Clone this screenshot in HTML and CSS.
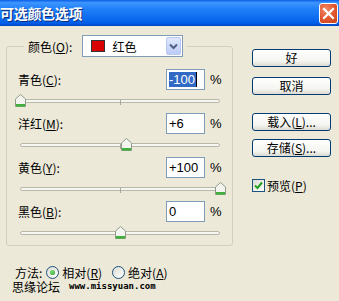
FILE: index.html
```html
<!DOCTYPE html>
<html lang="zh-CN">
<head>
  <meta charset="UTF-8" />
  <title>可选颜色选项</title>
  <link rel="stylesheet" href="styles.css">
</head>
<body>
  <div class="dialog">
    <div class="titlebar">
      <span class="title">可选颜色选项</span>
      <span class="close">
        <svg width="13" height="13" viewBox="0 0 13 13"><path d="M2 2 L11 11 M11 2 L2 11" stroke="#fff" stroke-width="2.2" stroke-linecap="square"/></svg>
      </span>
    </div>

    <div class="main">
      <div class="left">
        <fieldset class="group">
          <legend class="legend">
            <span class="legend-label">颜色(<u>O</u>):</span>
            <span class="select">
              <span class="swatch"></span>
              <span class="select-text">红色</span>
              <span class="select-btn">
                <svg width="9" height="7" viewBox="0 0 9 7"><path d="M1 1.5 L4.5 5 L8 1.5" fill="none" stroke="#4d6185" stroke-width="2"/></svg>
              </span>
            </span>
          </legend>

          <div class="field">
            <div class="line">
              <span class="label">青色(<u>C</u>):</span>
              <span class="input"><span class="sel">-100</span><span class="caret"></span></span>
              <span class="pct">%</span>
            </div>
            <div class="slider">
              <div class="track"><span class="tick"></span></div>
              <span class="thumb" style="left: 0%"><svg width="11" height="13" viewBox="0 0 11 13"><path d="M0.5 5 L5.5 0.5 L10.5 5 L10.5 12.5 L0.5 12.5 Z" fill="#f4f4f0" stroke="#8d9a8a"/><rect x="1" y="10" width="9" height="2.5" fill="#3fb03a"/></svg></span>
            </div>
          </div>

          <div class="field">
            <div class="line">
              <span class="label">洋红(<u>M</u>):</span>
              <span class="input">+6</span>
              <span class="pct">%</span>
            </div>
            <div class="slider">
              <div class="track"><span class="tick"></span></div>
              <span class="thumb" style="left: 53%"><svg width="11" height="13" viewBox="0 0 11 13"><path d="M0.5 5 L5.5 0.5 L10.5 5 L10.5 12.5 L0.5 12.5 Z" fill="#f4f4f0" stroke="#8d9a8a"/><rect x="1" y="10" width="9" height="2.5" fill="#3fb03a"/></svg></span>
            </div>
          </div>

          <div class="field">
            <div class="line">
              <span class="label">黄色(<u>Y</u>):</span>
              <span class="input">+100</span>
              <span class="pct">%</span>
            </div>
            <div class="slider">
              <div class="track"><span class="tick"></span></div>
              <span class="thumb" style="left: 100%"><svg width="11" height="13" viewBox="0 0 11 13"><path d="M0.5 5 L5.5 0.5 L10.5 5 L10.5 12.5 L0.5 12.5 Z" fill="#f4f4f0" stroke="#8d9a8a"/><rect x="1" y="10" width="9" height="2.5" fill="#3fb03a"/></svg></span>
            </div>
          </div>

          <div class="field">
            <div class="line">
              <span class="label">黑色(<u>B</u>):</span>
              <span class="input">0</span>
              <span class="pct">%</span>
            </div>
            <div class="slider">
              <div class="track"><span class="tick"></span></div>
              <span class="thumb" style="left: 50%"><svg width="11" height="13" viewBox="0 0 11 13"><path d="M0.5 5 L5.5 0.5 L10.5 5 L10.5 12.5 L0.5 12.5 Z" fill="#f4f4f0" stroke="#8d9a8a"/><rect x="1" y="10" width="9" height="2.5" fill="#3fb03a"/></svg></span>
            </div>
          </div>
        </fieldset>

        <div class="method">
          <span class="method-label">方法:</span>
          <span class="radio checked"></span>
          <span class="radio-text">相对(<u>R</u>)</span>
          <span class="radio"></span>
          <span class="radio-text">绝对(<u>A</u>)</span>
        </div>

        <div class="watermark">
          <span class="wm-cn">思缘论坛</span>
          <span class="wm-url">www.missyuan.com</span>
        </div>
      </div>

      <div class="right">
        <button class="btn btn-ok">好</button>
        <button class="btn btn-cancel">取消</button>
        <button class="btn btn-load">载入(<u>L</u>)...</button>
        <button class="btn btn-save">存储(<u>S</u>)...</button>
        <div class="check-row">
          <span class="checkbox">
            <svg width="9" height="9" viewBox="0 0 9 9"><path d="M1 4.5 L3.5 7 L8 1.5" fill="none" stroke="#21a121" stroke-width="2"/></svg>
          </span>
          <span class="check-text">预览(<u>P</u>)</span>
        </div>
      </div>
    </div>
  </div>
</body>
</html>
```

FILE: styles.css
```css
body {
  margin: 0;
  padding: 0;
  background: #ece9d8;
  font-family: "Noto Sans CJK SC", "Liberation Sans", sans-serif;
  font-size: 12px;
  color: #000;
}

.dialog {
  width: 339px;
  height: 301px;
  overflow: hidden;
  background: #ece9d8;
}

/* XP title bar */
.titlebar {
  height: 26px;
  display: flex;
  align-items: center;
  justify-content: space-between;
  background: linear-gradient(#0a5fe6 0%, #3d95ff 10%, #1f80f8 35%, #0d6cf0 70%, #005ce6 90%, #0044c0 100%);
}

.title {
  color: #fff;
  font-weight: bold;
  font-size: 14px;
  letter-spacing: -0.3px;
  text-shadow: 1px 1px 0 #0a2c7a;
}

.close {
  width: 17px;
  height: 19px;
  margin-right: 1px;
  border: 1px solid #fff;
  border-radius: 3px;
  background: radial-gradient(circle at 35% 30%, #f08a66, #e0542b 55%, #c8401c);
  display: flex;
  align-items: center;
  justify-content: center;
}

.main {
  display: flex;
}

.left {
  width: 239px;
}

/* group box */
.group {
  margin: 9px 0 0 6px;
  width: 227px;
  box-sizing: border-box;
  padding: 12px 0 0 0;
  border: 1px solid #d0d0bf;
  border-radius: 3px;
  min-width: 0;
}

.legend {
  margin-left: 17px;
  padding: 0 4px;
  display: flex;
  align-items: center;
  height: 22px;
}

.legend-label {
  margin-right: 10px;
}

.select {
  width: 101px;
  height: 22px;
  box-sizing: border-box;
  border: 1px solid #7f9db9;
  background: #fff;
  display: flex;
  align-items: center;
}

.swatch {
  width: 12px;
  height: 10px;
  margin-left: 8px;
  border: 1px solid #333;
  background: #d90000;
}

.select-text {
  margin-left: 7px;
  flex: 1;
}

.select-btn {
  width: 15px;
  height: 18px;
  margin-right: 1px;
  border: 1px solid #b8c8f0;
  border-radius: 2px;
  background: linear-gradient(#dfe8fd, #bcccf6);
  display: flex;
  align-items: center;
  justify-content: center;
  box-sizing: border-box;
}

/* rows */
.field {
  height: 44px;
}

.line {
  display: flex;
  align-items: center;
  height: 21px;
  padding: 0 12px 0 11px;
}

.label {
  flex: 1;
}

.input {
  width: 39px;
  height: 21px;
  box-sizing: border-box;
  border: 1px solid #7f9db9;
  background: #fff;
  padding: 0 2px;
  display: flex;
  align-items: center;
  font-family: "Liberation Sans", sans-serif;
  font-size: 13px;
}

.sel {
  background: #316ac5;
  color: #fff;
  line-height: 15px;
  padding-right: 1px;
}

.caret {
  width: 1px;
  height: 15px;
  background: #000;
}

.pct {
  width: 10px;
  padding-left: 5px;
  font-family: "Liberation Sans", sans-serif;
  font-size: 13px;
}

.slider {
  position: relative;
  height: 23px;
  margin: 0 12px 0 13px;
}

.track {
  position: relative;
  top: 9px;
  height: 2px;
  border: 1px solid #b8b8a8;
  border-radius: 2px;
  background: #f7f7f2;
}

.tick {
  position: absolute;
  left: 50%;
  top: 0;
  width: 1px;
  height: 5px;
  background: #a8a89a;
}

.thumb {
  position: absolute;
  top: 4px;
  width: 11px;
  height: 13px;
  margin-left: -5px;
}

.thumb svg {
  display: block;
}

/* method row */
.method {
  display: flex;
  align-items: center;
  height: 13px;
  line-height: 13px;
  margin-top: 20px;
  padding-left: 15px;
}

.method-label {
  margin-right: 4px;
}

.radio {
  width: 11px;
  height: 11px;
  border: 1px solid #1c5180;
  border-radius: 50%;
  background: linear-gradient(135deg, #dcdcd4, #fff);
  display: flex;
  align-items: center;
  justify-content: center;
  margin-right: 3px;
}

.radio.checked::after {
  content: "";
  width: 5px;
  height: 5px;
  border-radius: 50%;
  background: radial-gradient(circle at 40% 35%, #7ee07a, #21a121);
}

.radio-text {
  margin-right: 10px;
}

.watermark {
  display: flex;
  align-items: center;
  height: 13px;
  line-height: 13px;
  margin-top: 1px;
  padding-left: 12px;
}

.wm-cn {
  font-size: 12px;
  margin-right: 9px;
}

.wm-url {
  font-family: "DejaVu Sans Mono", monospace;
  font-weight: bold;
  font-size: 9px;
}

/* right column */
.right {
  display: flex;
  flex-direction: column;
  padding: 23px 0 0 13px;
}

.btn {
  width: 79px;
  height: 18px;
  padding: 0;
  border: 1px solid #003c74;
  border-radius: 3px;
  background: linear-gradient(#ffffff, #f4f4f0 70%, #dcdad0);
  font-family: "Noto Sans CJK SC", "Liberation Sans", sans-serif;
  font-size: 12px;
  color: #000;
  line-height: 16px;
}

.btn-cancel {
  margin-top: 10px;
}

.btn-load {
  margin-top: 18px;
}

.btn-save {
  margin-top: 8px;
}

.check-row {
  display: flex;
  align-items: center;
  margin-top: 20px;
}

.checkbox {
  width: 11px;
  height: 11px;
  border: 1px solid #1c5180;
  background: linear-gradient(135deg, #dcdcd4, #fff);
  display: flex;
  align-items: center;
  justify-content: center;
  margin-right: 2px;
}
```
